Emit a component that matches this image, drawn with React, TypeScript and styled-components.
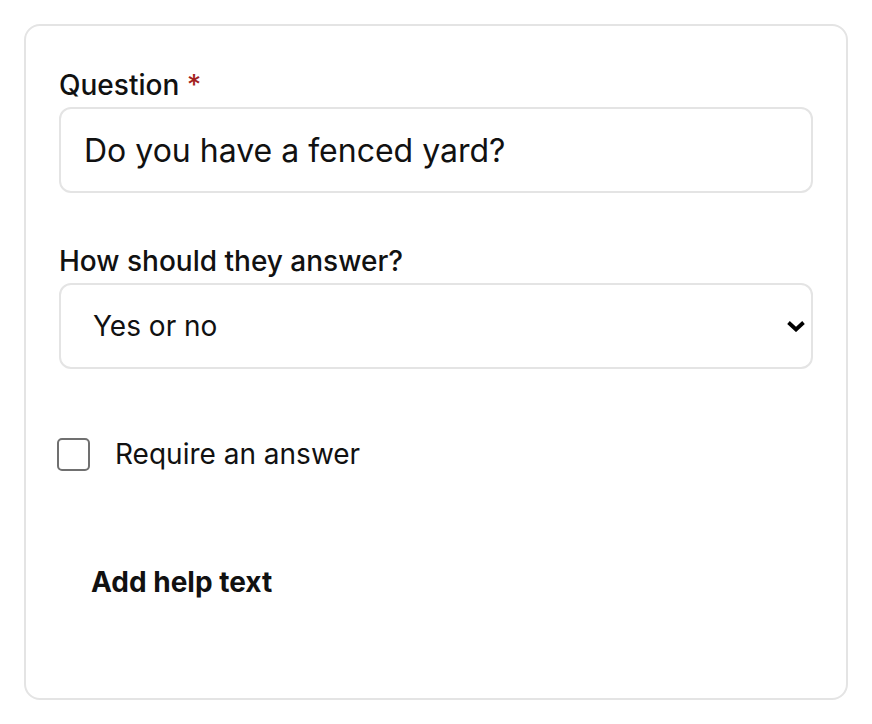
import styled, { createGlobalStyle } from "styled-components";

const GlobalStyle = createGlobalStyle`
  * { box-sizing: border-box; }
  html, body {
    margin: 0;
    background: #ffffff;
    font-family: Inter, "Noto Sans", "Liberation Sans", sans-serif;
    color: #111111;
  }
`;

export default function App() {
  return (
    <Page>
      <GlobalStyle />
      <Card>
        <Field>
          <Label htmlFor="question">
            Question <Required>*</Required>
          </Label>
          <TextInput id="question" defaultValue="Do you have a fenced yard?" />
        </Field>

        <Field>
          <Label htmlFor="answer-type">How should they answer?</Label>
          <SelectWrap>
            <Select id="answer-type" defaultValue="yesno">
              <option value="yesno">Yes or no</option>
              <option value="short">Short answer</option>
              <option value="choice">Multiple choice</option>
            </Select>
            <Chevron width="20" height="12" viewBox="0 0 20 12" fill="none">
              <path d="M2.5 2.5 L10 9.5 L17.5 2.5" stroke="#000" strokeWidth="3.8" />
            </Chevron>
          </SelectWrap>
        </Field>

        <CheckRow>
          <Checkbox type="checkbox" />
          <CheckText>Require an answer</CheckText>
        </CheckRow>

        <HelpButton type="button">Add help text</HelpButton>
      </Card>
    </Page>
  );
}

const Page = styled.div`
  padding: 24px;
`;

const Card = styled.div`
  border: 2px solid #e4e4e4;
  border-radius: 16px;
  height: 676px;
  padding: 38px 33px 0;
  display: flex;
  flex-direction: column;
`;

const Field = styled.div`
  display: flex;
  flex-direction: column;
  gap: 1px;
  margin-bottom: 47px;
`;

const Label = styled.label`
  font-size: 28px;
  line-height: 42px;
  font-weight: 500;
  color: #111111;
`;

const Required = styled.span`
  color: #a31f1f;
`;

const TextInput = styled.input`
  height: 86px;
  width: 100%;
  border: 2px solid #e4e4e4;
  border-radius: 12px;
  padding: 0 23px;
  font-family: inherit;
  font-size: 32px;
  color: #111111;
  background: #fff;
  outline: none;
`;

const SelectWrap = styled.div`
  position: relative;
`;

const Select = styled.select`
  appearance: none;
  height: 86px;
  width: 100%;
  border: 2px solid #e4e4e4;
  border-radius: 12px;
  padding: 0 60px 0 32px;
  font-family: inherit;
  font-size: 28px;
  color: #111111;
  background: #fff;
  outline: none;
`;

const Chevron = styled.svg`
  position: absolute;
  right: 7px;
  top: 37px;
  pointer-events: none;
`;

const CheckRow = styled.label`
  display: flex;
  align-items: center;
  gap: 25px;
  margin-top: 17px;
  margin-left: -2px;
  height: 42px;
`;

const Checkbox = styled.input`
  appearance: none;
  margin: 0;
  width: 33px;
  height: 33px;
  border: 2px solid #707070;
  border-radius: 5px;
  background: #fff;
  flex-shrink: 0;
`;

const CheckText = styled.span`
  font-size: 28px;
  line-height: 42px;
  color: #111111;
`;

const HelpButton = styled.button`
  align-self: flex-start;
  margin-top: 70px;
  padding: 16px 32px;
  border: none;
  background: transparent;
  font-family: inherit;
  font-size: 28px;
  line-height: 42px;
  font-weight: 700;
  color: #111111;
  cursor: pointer;
`;
